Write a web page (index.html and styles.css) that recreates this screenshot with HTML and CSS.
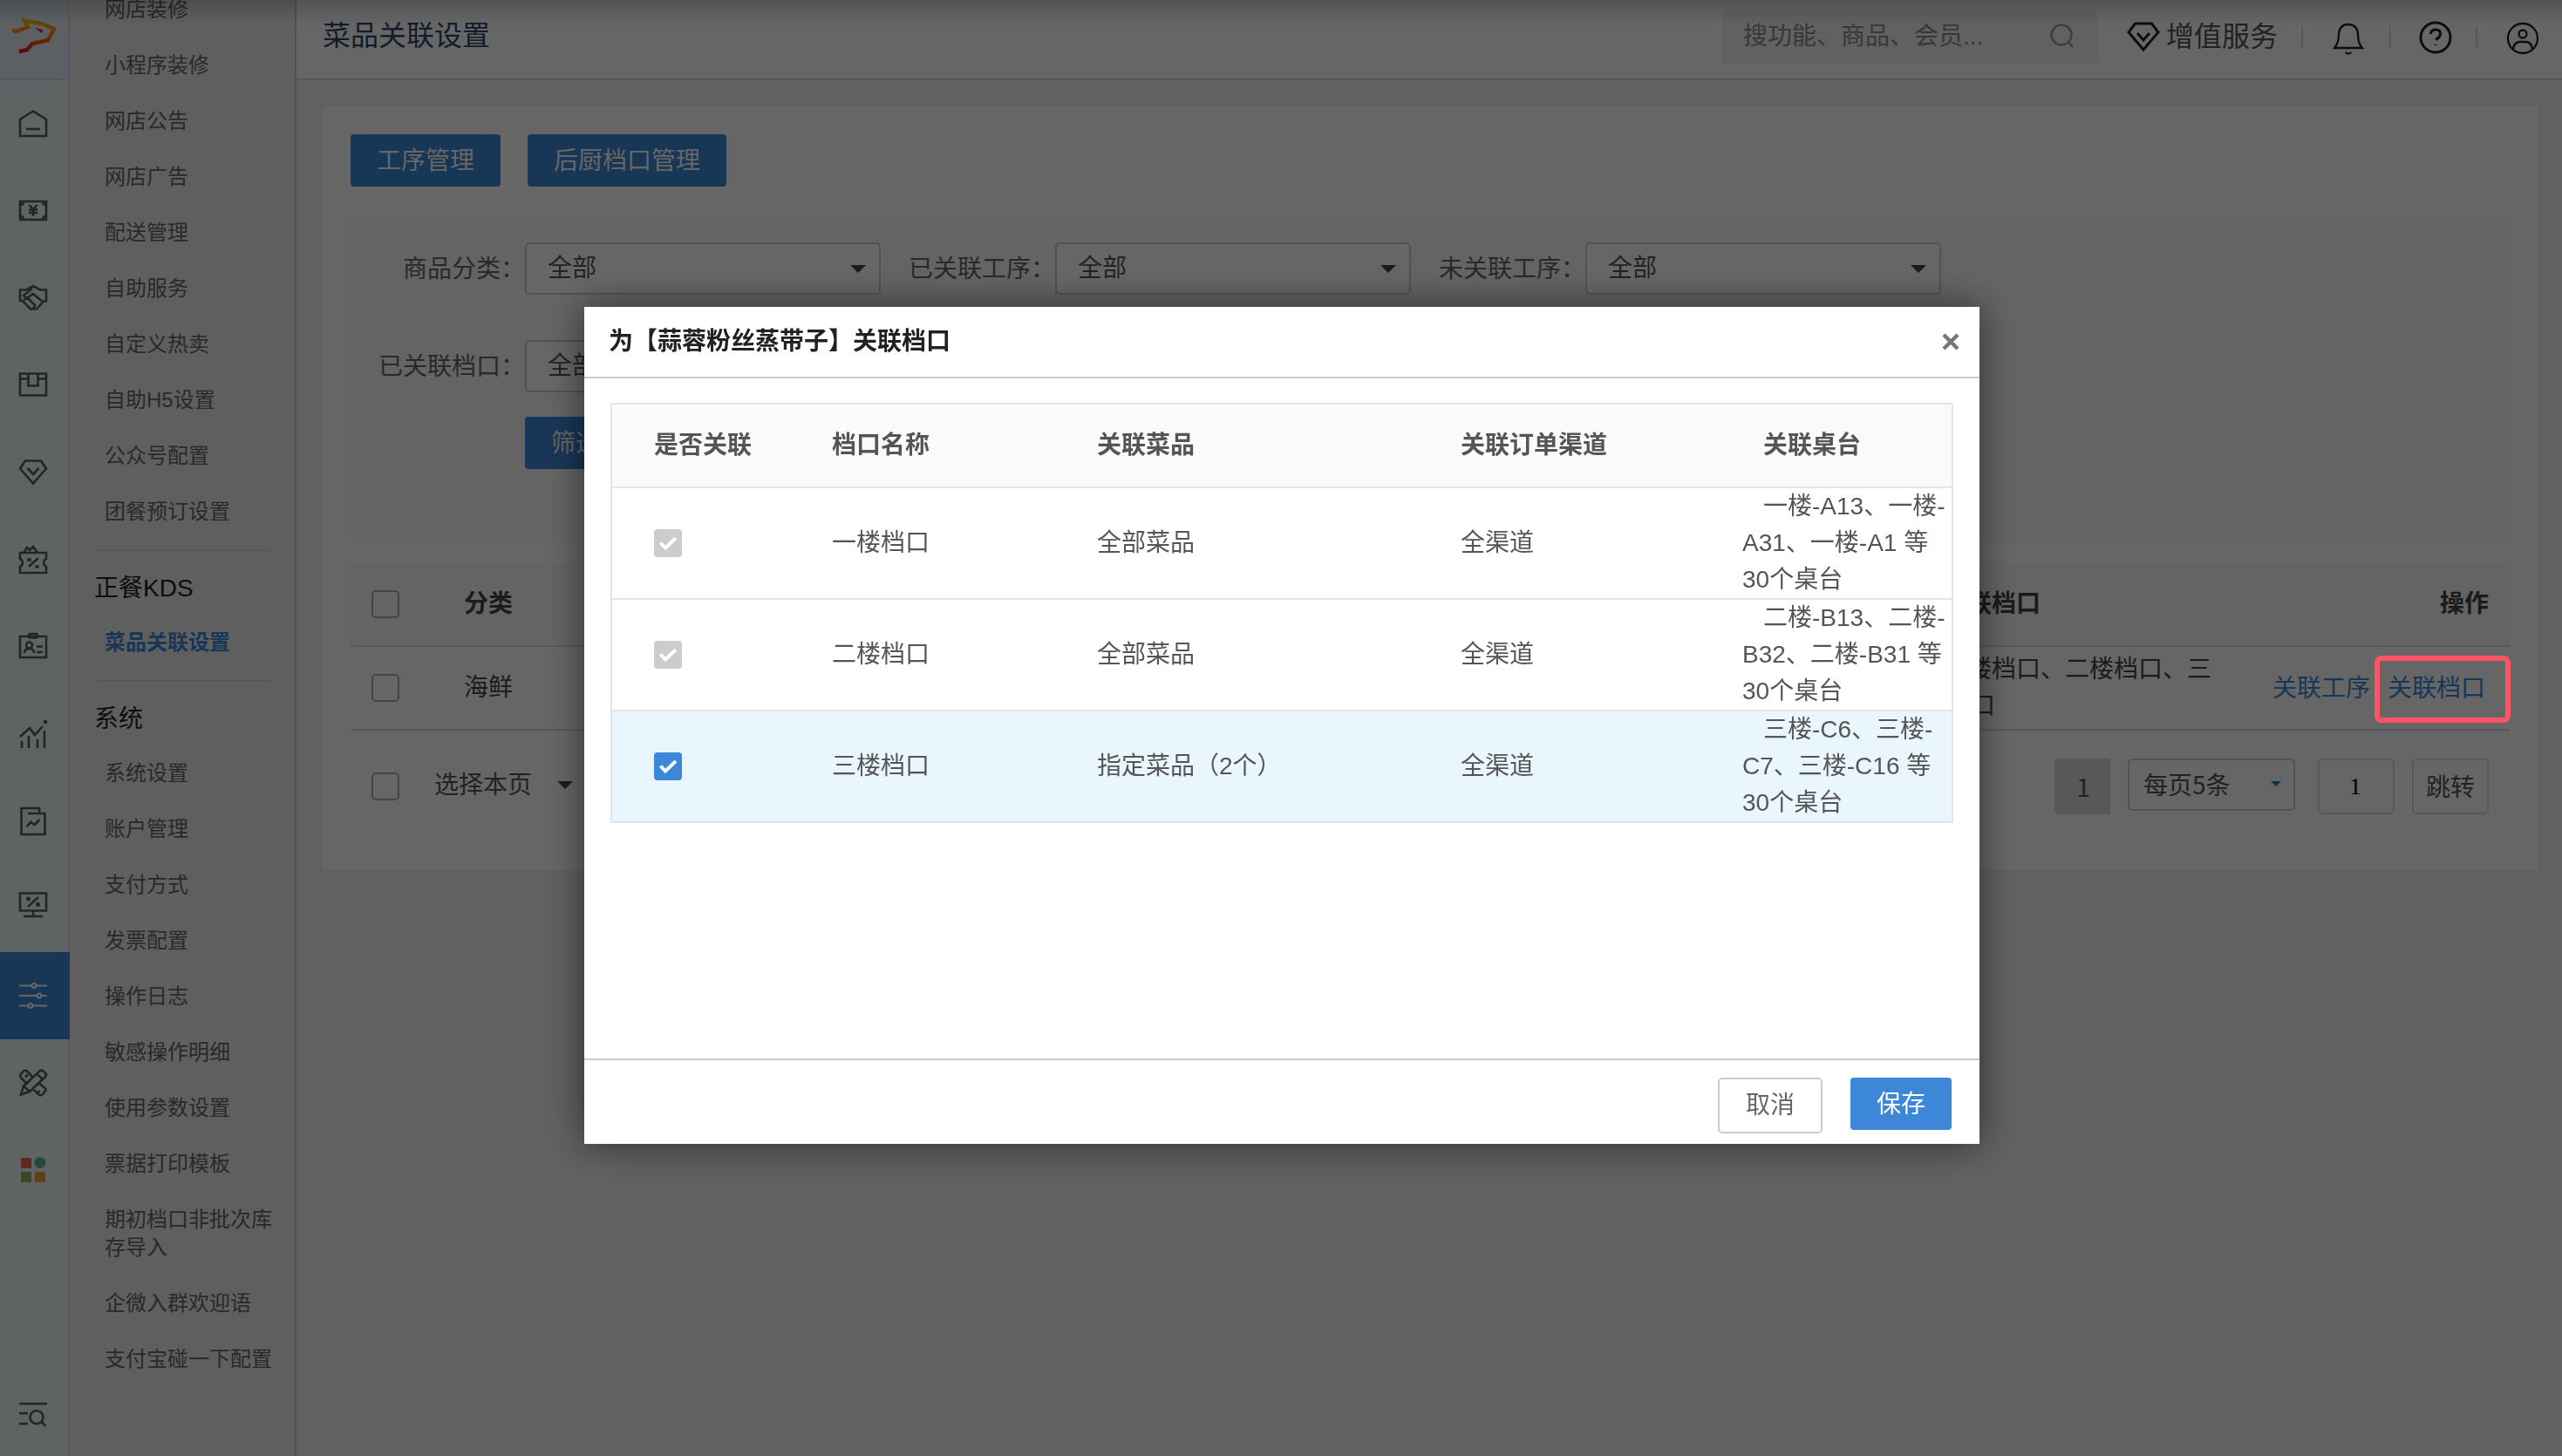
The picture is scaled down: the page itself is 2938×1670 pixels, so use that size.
FILE: index.html
```html
<!DOCTYPE html>
<html lang="zh-CN">
<head>
<meta charset="utf-8">
<title>菜品关联设置</title>
<link rel="stylesheet" href="styles.css">
</head>
<body>
<div class="app">
  <nav class="rail">
    <div class="rail-logo">
      <svg width="52" height="44" viewBox="0 0 52 44" fill="none">
        <defs><linearGradient id="lg" x1="0" y1="0" x2="0" y2="1"><stop offset="0" stop-color="#ffb400"/><stop offset=".5" stop-color="#ff7a1a"/><stop offset="1" stop-color="#e0151c"/></linearGradient></defs>
        <path d="M0 13l4 2 14-5-4-7 20 3 14 6-7 13-18 4-6 7-9 2" stroke="url(#lg)" stroke-width="4.5"/>
        <path d="M26 11l9 2-1 4z" fill="#e0152c"/>
      </svg>
    </div>
    <ul class="rail-list">
      <li><svg class="ic" viewBox="0 0 32 32"><path d="M1 11v19h30V11L16 1.500z M8 22h16"/></svg></li>
      <li><svg class="ic" viewBox="0 0 32 32"><path d="M1 5h30v21H1z M1 9q4 0 4-4M31 9q-4 0-4-4M1 22q4 0 4 4M31 22q-4 0-4 4M11.500 9l4.500 5 4.500-5M16 14v8M11 14.500h10M11 18h10"/></svg></li>
      <li><svg class="ic" viewBox="0 0 32 32"><path d="M1 6.500h7l8-4.500 8 4.500h7v13h-3l-8 9h-7L4 19H1z M15 5L5 13l4 3 7-5 11 9M5 17h6l7 7q0 4-4 4"/></svg></li>
      <li><svg class="ic" viewBox="0 0 32 32"><path d="M1 2.500h30v25H1z M1 8.500h9M21 8.500h10M10.500 2.500v14h11v-14"/></svg></li>
      <li><svg class="ic" viewBox="0 0 32 32"><path d="M7 2.500h18l6 9L16 28.500 1 11.500z M9.500 11l6.500 7 6.500-7"/></svg></li>
      <li><svg class="ic" viewBox="0 0 32 32"><path d="M1 8h30v7a5 5 0 0 0 0 9v7H1v-7a5 5 0 0 0 0-9z M5 8l4-6 3 3 4-4 5 7M11 24l11-10M10.500 15.500h2v1h-2zM19.500 23.500h2v1h-2z"/></svg></li>
      <li><svg class="ic" viewBox="0 0 32 32"><path d="M1 4h30v24H1z M6 23q0-5 5.500-5t5.500 5M20 15.500h7M20 22h7"/><rect x="11" y="1" width="10" height="4.500" rx="2"/><circle cx="11.500" cy="14" r="3.500"/></svg></li>
      <li><svg class="ic" viewBox="0 0 32 32"><path d="M1 19L12 9l6 8 9-10M3 24v8M11 18v14M21 22v10M29 12v20"/><path class="solid" d="M28 0h4v4h-4z"/></svg></li>
      <li><svg class="ic" viewBox="0 0 32 32"><path d="M23 6V1H2.500v30h27V7H10M8.500 22l5-5 4 3 6-6"/></svg></li>
      <li><svg class="ic" viewBox="0 0 32 32"><path d="M1 -1.500h30v20H1z M16 19v6M5 25h22M10 14L22 3"/><circle class="solid" cx="10.500" cy="5" r="2.500"/><circle class="solid" cx="21.500" cy="11.500" r="2.500"/></svg></li>
      <li class="on"><svg class="ic" viewBox="0 0 32 32"><path d="M0 4.500h14M20 4.500h12M0 16h20M26 16h6M0 27.500h10M16 27.500h16"/><circle cx="17" cy="4.500" r="2.500"/><circle cx="23" cy="16" r="2.500"/><circle cx="13" cy="27.500" r="2.500"/></svg></li>
      <li><svg class="ic" viewBox="0 0 32 32"><path d="M2 29.500l3-10L24 2q2-1 4 1l2 2q2 2 0 4L12 26z M5 19.500l7 6.500M20.500 6l6.500 6M12 13.500L8.500 17 2 10q-1.500-2 0-4l3-3.500q2-1.500 4 0L15 9M22.500 16l7 6q2 2 0 4l-3 3.500q-2 1.500-4 0L16.500 24M7 9.500l3-3M24 26l-3 0"/></svg></li>
      <li><svg class="apps" viewBox="0 0 32 32"><path fill="#ec6a4c" d="M2 2h12v12H2z"/><circle cx="24" cy="7.500" r="6.500" fill="#5bb89c"/><path fill="#84b951" d="M2 18h12v12H2z"/><path fill="#efa13d" d="M18 18h12v12H18z"/></svg></li>
    </ul>
    <div class="rail-foot"><svg class="ic" viewBox="0 0 32 32"><path d="M0 3h32M0 14h10M0 26h10M25 23.500l5.500 5"/><circle cx="20" cy="18.500" r="7.500"/></svg></div>
  </nav>

  <aside class="side">
    <div class="side-scroll">
      <a>网店装修</a><a>小程序装修</a><a>网店公告</a><a>网店广告</a><a>配送管理</a><a>自助服务</a><a>自定义热卖</a><a>自助H5设置</a><a>公众号配置</a><a>团餐预订设置</a>
      <hr>
      <h3>正餐KDS</h3>
      <a class="cur">菜品关联设置</a>
      <hr>
      <h3>系统</h3>
      <a>系统设置</a><a>账户管理</a><a>支付方式</a><a>发票配置</a><a>操作日志</a><a>敏感操作明细</a><a>使用参数设置</a><a>票据打印模板</a><a>期初档口非批次库存导入</a><a>企微入群欢迎语</a><a>支付宝碰一下配置</a>
    </div>
  </aside>

  <main class="main">
    <header class="top">
      <h1>菜品关联设置</h1>
      <div class="search"><span>搜功能、商品、会员...</span>
        <svg width="30" height="30" viewBox="0 0 30 30" fill="none" stroke="#999" stroke-width="2.500"><circle cx="14" cy="13" r="11.500"/><path d="M22 21l5 6"/></svg>
      </div>
      <div class="vip">
        <svg width="38" height="34" viewBox="0 0 38 34"><path d="M9.500 2h19L36 12 19 32 2 12z M12 13l7 8 7-8"/></svg>
        <span>增值服务</span>
      </div>
      <i class="sep"></i>
      <svg class="bell" width="36" height="38" viewBox="0 0 36 38"><path d="M2 29q5-5 5-16Q8 2 18 2t11 11q0 11 5 16z M14.500 34q3.500 3 7 0"/></svg>
      <i class="sep"></i>
      <svg class="help" width="38" height="38" viewBox="0 0 38 38"><circle cx="19" cy="19" r="17"/><path d="M13.500 15q0-5 5.500-5t5.500 5q0 4-5.500 6.500M19 27v1"/></svg>
      <i class="sep"></i>
      <svg class="user" width="38" height="38" viewBox="0 0 38 38"><circle cx="19" cy="19" r="17"/><circle cx="19" cy="14" r="4.500"/><path d="M8 31q1-8 8-8h6q7 0 8 8"/></svg>
    </header>

    <section class="card">
      <div class="actions"><button class="btn">工序管理</button><button class="btn">后厨档口管理</button></div>
      <form class="filter">
        <div class="frow">
          <label>商品分类：</label><div class="sel">全部<i class="caret"></i></div>
          <label>已关联工序：</label><div class="sel">全部<i class="caret"></i></div>
          <label>未关联工序：</label><div class="sel">全部<i class="caret"></i></div>
        </div>
        <div class="frow"><label>已关联档口：</label><div class="sel">全部<i class="caret"></i></div></div>
        <div class="fbtn"><button class="btn" type="button">筛选</button></div>
      </form>
      <div class="grid ghead"><i class="box"></i><span>分类</span><span class="stall"><i class="ind"></i>关联档口</span><span class="op">操作</span></div>
      <div class="grid grow"><i class="box"></i><span>海鲜</span><span class="stall"><i class="ind"></i>一楼档口、二楼档口、三楼档口</span><span class="links"><a>关联工序</a><a>关联档口</a></span></div>
      <div class="pager">
        <i class="box"></i><span class="pick">选择本页</span><i class="caret"></i>
        <span class="pg">1</span>
        <div class="per">每页5条<i class="caret blue"></i></div>
        <div class="num">1</div>
        <div class="go">跳转</div>
      </div>
    </section>
  </main>
</div>

<div class="mask">
  <div class="shade"></div>
  <div class="modal">
    <div class="mhead"><h2>为【蒜蓉粉丝蒸带子】关联档口</h2>
      <svg width="22" height="22" viewBox="0 0 22 22" stroke="#777" stroke-width="4.500" fill="none"><path d="M3 3l16 16M19 3L3 19"/></svg></div>
    <div class="mbody">
      <div class="tbl">
        <div class="tr th"><span>是否关联</span><span>档口名称</span><span>关联菜品</span><span>关联订单渠道</span><span>关联桌台</span></div>
        <div class="tr"><span><i class="chk"><svg viewBox="0 0 32 32"><path d="M7.500 15.500l5.500 6L25 10"/></svg></i></span><span>一楼档口</span><span>全部菜品</span><span>全渠道</span><p><i class="ind"></i>一楼-A13、一楼-<br>A31、一楼-A1 等<br>30个桌台</p></div>
        <div class="tr"><span><i class="chk"><svg viewBox="0 0 32 32"><path d="M7.500 15.500l5.500 6L25 10"/></svg></i></span><span>二楼档口</span><span>全部菜品</span><span>全渠道</span><p><i class="ind"></i>二楼-B13、二楼-<br>B32、二楼-B31 等<br>30个桌台</p></div>
        <div class="tr hot"><span><i class="chk"><svg viewBox="0 0 32 32"><path d="M7.500 15.500l5.500 6L25 10"/></svg></i></span><span>三楼档口</span><span>指定菜品（2个）</span><span>全渠道</span><p><i class="ind"></i>三楼-C6、三楼-<br>C7、三楼-C16 等<br>30个桌台</p></div>
      </div>
    </div>
    <div class="mfoot"><button class="cancel">取消</button><button class="btn save">保存</button></div>
  </div>
  <div class="mark"></div>
</div>
</body>
</html>
```
FILE: styles.css
```css
* { box-sizing: border-box; margin: 0; padding: 0; }
body { font: 28px/42px "Liberation Sans", "Noto Sans CJK SC", sans-serif; color: #555; background: #f2f2f2; width: 2938px; height: 1670px; overflow: hidden; }
ul { list-style: none; }
i { font-style: normal; }
svg { display: block; flex: none; }
button { font: inherit; display: block; border: 0; cursor: pointer; }

.app { display: flex; height: 1670px; }

/* icon rail */
.rail { width: 80px; flex: none; background: #eef8fa; border-right: 2px solid #cfe2f5; display: flex; flex-direction: column; }
.rail-logo { height: 92px; flex: none; padding: 21px 0 0 14px; background: #e6f1f6; border-bottom: 2px solid #cfe2f5; }
.rail-list li { height: 100px; width: 80px; padding: 34px 0 0 22px; }
.rail-list .on { background: #3c87d8; }
.ic, .apps { width: 32px; height: 32px; overflow: visible; }
.ic { fill: none; stroke: #555b60; stroke-width: 2.6; }
.ic .solid { fill: #555b60; stroke: none; }
.on .ic { stroke: #fff; stroke-width: 2.2; }
.rail-foot { margin-top: auto; padding: 0 0 31px 22px; }

/* menu */
.side { width: 260px; flex: none; background: #eee; border-right: 2px solid #ccc; overflow: hidden; }
.side-scroll { margin-top: -21px; }
.side a { display: block; padding: 16px 24px 16px 40px; font-size: 24px; line-height: 32px; color: #666; }
.side .cur { color: #3c87d8; font-weight: 700; }
.side hr { border: 0; height: 2px; background: #dcdcdc; margin: 11px 28px 0; }
.side h3 { font-weight: 400; font-size: 28px; line-height: 42px; height: 73px; padding: 22px 28px 0; color: #222; }

/* page */
.main { flex: 1; }
.top { height: 92px; background: #fff; border-bottom: 2px solid #d9d9d9; display: flex; align-items: center; padding: 0 26px 6px 30px; }
.top h1 { font-weight: 400; font-size: 32px; color: #2e4a66; margin-right: auto; padding-bottom: 3px; }
.search { width: 432px; height: 64px; background: #f3f3f3; border-radius: 6px; display: flex; align-items: center; justify-content: space-between; padding: 0 26px 0 25px; color: #8c8c8c; }
.vip { display: flex; align-items: center; gap: 7px; margin-left: 33px; margin-right: 27px; font-size: 32px; color: #555; }
.vip svg, .bell, .help, .user { fill: none; stroke: #222; stroke-width: 3; }
.bell, .user { stroke-width: 2.3; }
.sep { width: 2px; height: 24px; background: #dcdcdc; }
.bell { margin: 6px 29px 0 34px; }
.help { margin: 2px 27px 0 32px; }
.user { margin: 4px 0 0 33px; }

.card { margin: 30px 28px 0 30px; height: 876px; background: #fff; padding: 32px; }
.actions { display: flex; gap: 31px; }
.btn { height: 60px; padding: 1px 30px 0; border-radius: 4px; background: #3c87d8; color: #fff; }
.filter { display: block; margin-top: 32px; height: 376px; background: #fafafa; padding-top: 32px; }
.frow { display: flex; height: 60px; margin-bottom: 52px; line-height: 62px; }
.frow label { width: 200px; text-align: right; color: #666; }
.sel { width: 408px; border: 2px solid #ccc; border-radius: 5px; background: #fff; line-height: 58px; padding: 0 15px 0 24px; display: flex; justify-content: space-between; align-items: center; }
.fbtn { display: flex; margin-left: 200px; margin-top: -24px; }
.caret { border: 9px solid transparent; border-top-color: #444; border-bottom: 0; }

.grid { display: grid; grid-template-columns: 130px 1672px 346px 1fr; align-items: center; border-bottom: 2px solid #ddd; padding-right: 24px; color: #444; }
.grid .box { margin-left: 24px; }
.ghead { margin-top: 24px; height: 96px; background: #fafafa; font-weight: 700; }
.grow { height: 96px; }
.op { text-align: right; }
.links { display: flex; justify-content: flex-end; gap: 20px; padding: 1px 4px 0 0; color: #3c87d8; }
.box { display: block; width: 32px; height: 32px; border: 2px solid #aaa; border-radius: 5px; }
.ind { display: inline-block; width: 24px; }
.pager { display: flex; align-items: flex-start; padding: 32px 24px 0; color: #555; }
.pager .box { margin-top: 16px; }
.pick { margin: 10px 29px 0 40px; }
.pager > .caret { margin: 26px auto 0 0; }
.pg, .per { font-family: "Noto Sans CJK SC", sans-serif; }
.pg { width: 64px; height: 64px; line-height: 64px; text-align: center; background: #ddd; border-radius: 5px 0 0 5px; margin-right: 20px; padding-left: 2px; }
.per { width: 192px; height: 60px; line-height: 54px; border: 2px solid #ccc; border-radius: 5px; padding: 0 14px 2px 16px; margin-right: 26px; display: flex; justify-content: space-between; align-items: center; }
.blue { border-width: 6px 6px 0; border-top-color: #2a7fc0; }
.num, .go { width: 88px; height: 64px; border: 2px solid #ddd; border-radius: 5px; text-align: center; line-height: 64px; }
.num { color: #000; font-family: "Liberation Serif", serif; line-height: 60px; padding-right: 2px; margin-right: 20px; }

/* dialog */
.mask { position: fixed; inset: 0; background: rgba(0, 0, 0, .6); }
.shade { height: 28px; background: linear-gradient(rgba(0, 0, 0, .18), transparent); }
.modal { width: 1600px; height: 960px; margin: 324px 0 0 670px; background: #fff; display: flex; flex-direction: column; box-shadow: 0 0 40px rgba(0, 0, 0, .55); }
.mhead { height: 82px; border-bottom: 2px solid #ccc; padding: 0 22px 0 28px; display: flex; align-items: center; justify-content: space-between; color: #222; }
.mhead h2 { font-size: 28px; font-weight: 700; }
.mbody { flex: 1; padding: 28px 30px; }
.tbl { border: 2px solid #e5e5e5; }
.tr { display: grid; grid-template-columns: 228px 304px 417px 347px 1fr; align-items: center; height: 128px; border-bottom: 2px solid #e5e5e5; }
.tr > span { padding-left: 24px; }
.tr > span:first-child { padding-left: 48px; }
.tr:last-child { border-bottom: 0; height: 126px; }
.tr p { white-space: nowrap; }
.th { height: 96px; font-weight: 700; background: #fafafa; }
.hot { background: #e9f6fd; }
.chk { display: block; width: 32px; height: 32px; border-radius: 4px; background: #ccc; }
.chk path { fill: none; stroke: #fff; stroke-width: 4; }
.hot .chk { background: #3c87d8; }
.mfoot { height: 98px; border-top: 2px solid #ccc; padding: 20px 32px 0; display: flex; justify-content: flex-end; gap: 32px; }
.cancel { width: 120px; height: 64px; border: 2px solid #ccc; border-radius: 5px; background: #fff; color: #666; }
.save { width: 116px; }
.mark { position: absolute; left: 2723px; top: 752px; width: 156px; height: 77px; border: 6px solid #ff5465; border-radius: 8px; }
```
